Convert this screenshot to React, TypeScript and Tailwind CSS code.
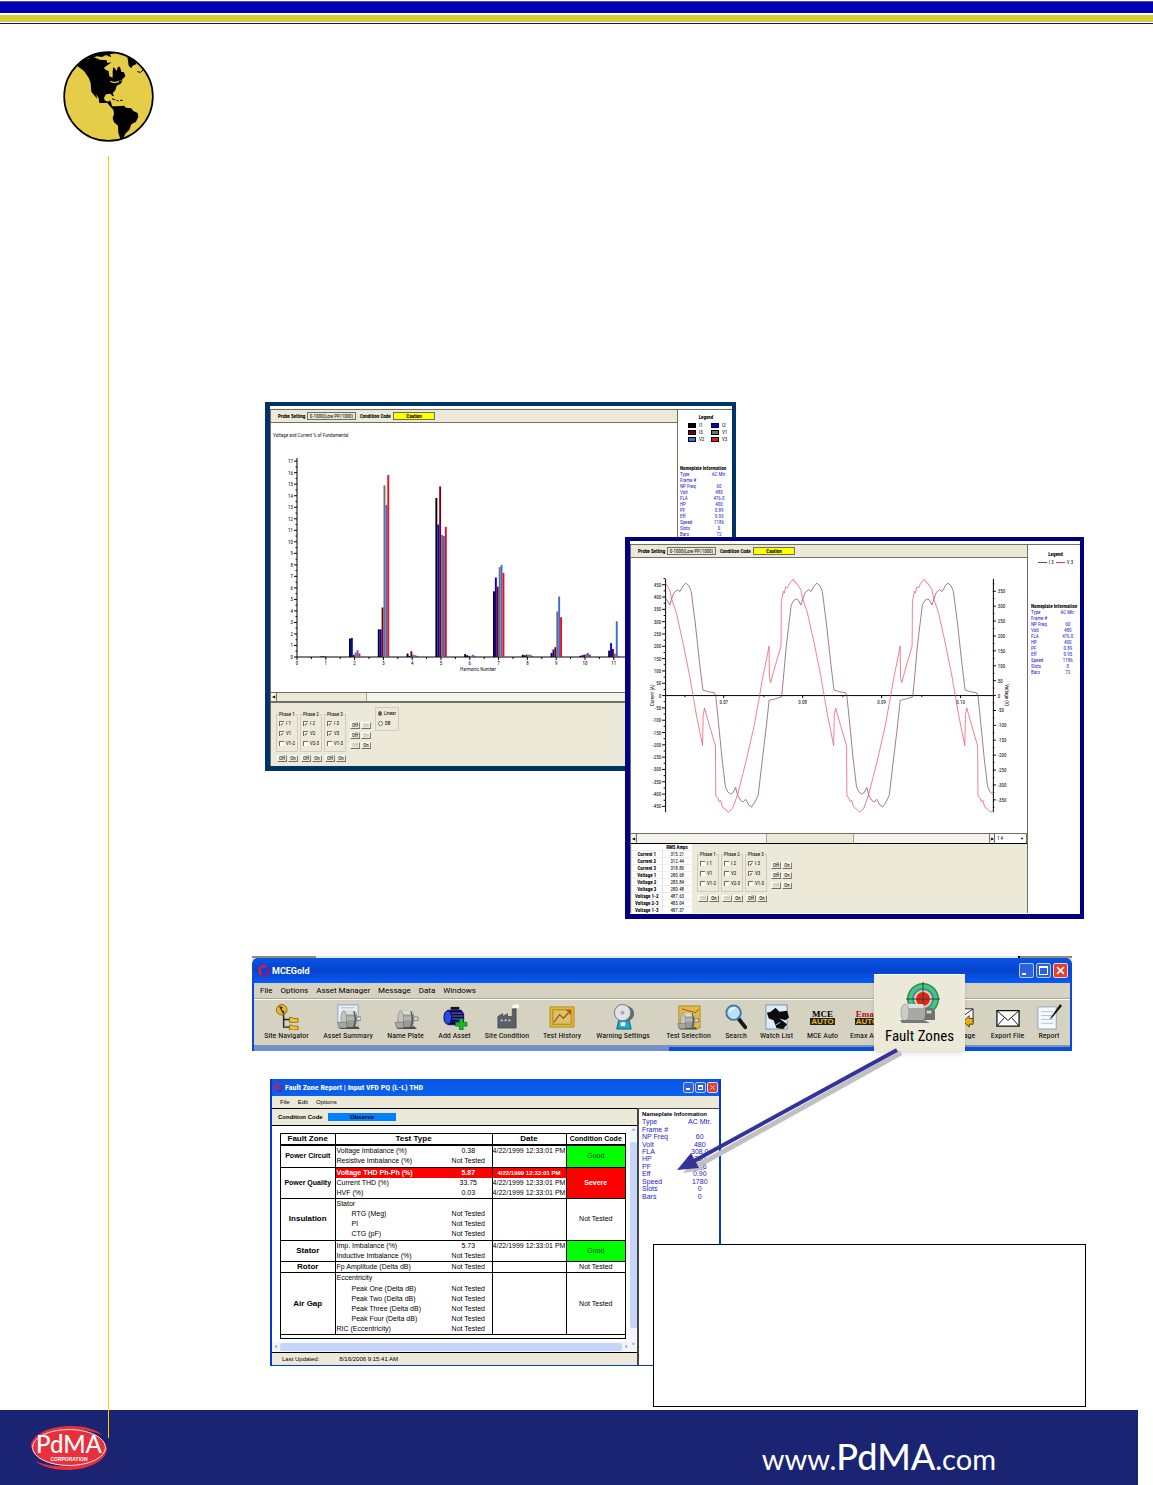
import type { ReactNode } from 'react';
import clsx from 'clsx';

type Point = [number, number];

const NAMEPLATE_LABELS = ['Type', 'Frame #', 'NP Freq', 'Volt', 'FLA', 'HP', 'PF', 'Eff', 'Speed', 'Slots', 'Bars'];

const HARMONIC_COLORS = ['#000000', '#0000dd', '#7a0010', '#707070', '#4169d9', '#e8101c'];

// One row per harmonic, in the order I1, I2, I3, V1, V2, V3 (% of fundamental)
const HARMONICS = [
  [0.05, 0.05, 0.05, 0.05, 0, 0],
  [1.6, 1.65, 0.2, 0.4, 0.6, 0.3],
  [2.4, 2.4, 4.3, 14.9, 13.2, 15.8],
  [0.3, 0.1, 0.5, 0.2, 0.15, 0.1],
  [13.8, 11.5, 14.8, 10.6, 10.5, 11.3],
  [0.25, 0.15, 0.1, 0.1, 0.2, 0.1],
  [5.7, 6.9, 6.1, 7.8, 8, 7.3],
  [0.2, 0.15, 0.2, 0.2, 0.2, 0.1],
  [0.35, 0.65, 0.85, 3.95, 5.25, 3.45],
  [0.1, 0.15, 0.2, 0.25, 0.35, 0.2],
  [0.55, 1.2, 0.7, 0.3, 3.1, 0.1],
];

// A single cycle of each wave form, three units to a pixel
const CYCLE = 396;
const VOLTAGE_WAVE: Point[] = [
  [131, 158], [145, 180], [150, 205], [165, 250], [185, 340], [205, 440], [225, 555], [244, 650], [246, 560], [250, 537],
  [265, 590], [283, 652], [284, 803], [290, 808], [294, 820], [299, 816], [304, 836], [313, 842], [322, 852], [335, 840],
  [350, 798], [375, 700], [400, 590], [425, 450], [445, 350], [446, 445], [450, 460], [458, 430], [465, 405], [481, 350],
  [482, 215], [488, 185], [491, 190], [495, 172], [501, 174], [506, 162], [518, 148], [525, 160],
];
const CURRENT_WAVE: Point[] = [
  [131, 208], [136, 210], [145, 226], [150, 210], [158, 188], [168, 180], [176, 185], [185, 169], [193, 160], [203, 168],
  [210, 185], [222, 280], [235, 400], [245, 483], [262, 488], [280, 491], [284, 500], [292, 580], [303, 690], [313, 775],
  [320, 790], [328, 797], [336, 793], [344, 777], [350, 800], [358, 815], [366, 821], [374, 813], [384, 830], [392, 836],
  [402, 822], [412, 800], [425, 690], [437, 590], [445, 514], [465, 509], [483, 503], [487, 460], [497, 350], [512, 225],
  [520, 212],
];

function wavePoints(cycle: Point[]) {
  return [0, 1, 2]
    .flatMap((n) => cycle.map(([x, y]) => [(x - 131 + n * CYCLE) / 3 + 34, y / 3 - 28]))
    .map(([x, y]) => `${x.toFixed(1)},${y.toFixed(1)}`)
    .join(' ');
}

function HarmonicChart() {
  const x0 = 26;
  const y0 = 234;
  return (
    <svg viewBox="0 0 406 269" className="block h-[269px] w-[406px]" role="img" aria-label="Harmonic spectrum" fontSize="5">
      <text x="2" y="14" fill="#222">Voltage and Current % of Fundamental</text>
      <path d={`M${x0} 35V${y0}H406`} fill="none" stroke="#000" />
      {Array.from({ length: 35 }, (_, i) => (
        <path key={i} d={`M${x0} ${y0 - i * 5.76}h${i % 2 ? -1.5 : -3}`} stroke="#000" />
      ))}
      {Array.from({ length: 18 }, (_, i) => (
        <text key={i} x="22" y={y0 + 2 - i * 11.52} textAnchor="end">{i}</text>
      ))}
      {Array.from({ length: 26 }, (_, i) => (
        <path key={i} d={`M${x0 + i * 14.4} ${y0}v${i % 2 ? 2 : 3}`} stroke="#000" />
      ))}
      {Array.from({ length: 12 }, (_, i) => (
        <text key={i} x={x0 + i * 28.8} y={y0 + 8} textAnchor="middle">{i}</text>
      ))}
      <text x="207" y={y0 + 14} textAnchor="middle" fill="#222">Harmonic Number</text>
      {HARMONICS.map((row, h) =>
        row.map((value, i) => (
          <rect
            key={`${h}-${i}`}
            x={x0 + (h + 1) * 28.8 - 5.6 + i * 1.9}
            y={y0 - value * 11.52}
            width="1.9"
            height={value * 11.52}
            fill={HARMONIC_COLORS[i]}
          />
        )),
      )}
    </svg>
  );
}

function WaveChart() {
  return (
    <svg viewBox="1 0 396 277" className="block h-[277px] w-[396px]" role="img" aria-label="Current and voltage wave forms" fontSize="5">
      <path d="M34.500 21V256M364.500 21V256M34 138.500H364" fill="none" stroke="#000" />
      {Array.from({ length: 38 }, (_, i) => (
        <path key={i} d={`M34 ${138.5 + (i - 19) * 6.2}h${i % 2 ? -3 : -1.5}`} stroke="#000" />
      ))}
      {Array.from({ length: 19 }, (_, i) => (
        <text key={i} x="30" y={140.5 + (i - 9) * 12.4} textAnchor="end">{(9 - i) * 50}</text>
      ))}
      {Array.from({ length: 31 }, (_, i) => (
        <path key={i} d={`M364 ${138.5 + (i - 15) * 7.5}h${i % 2 ? 3 : 1.5}`} stroke="#000" />
      ))}
      {Array.from({ length: 15 }, (_, i) => (
        <text key={i} x="369" y={140.5 + (i - 7) * 15}>{(7 - i) * 50}</text>
      ))}
      {['0.07', '0.08', '0.09', '0.10'].map((label, i) => (
        <g key={label}>
          <path d={`M${93 + i * 79.5} 138v3M${54 + i * 79.5} 138v2`} stroke="#000" />
          <text x={93 + i * 79.5} y="147" textAnchor="middle">{label}</text>
        </g>
      ))}
      <text transform="translate(23 149) rotate(-90)">Current (A)</text>
      <text transform="translate(376 127) rotate(90)">Voltage (V)</text>
      <svg x="34" y="0" width="331" height="277" viewBox="34 0 331 277">
        <polyline points={wavePoints(CURRENT_WAVE)} fill="none" stroke="#7d4058" strokeWidth="0.7" />
        <polyline points={wavePoints(VOLTAGE_WAVE)} fill="none" stroke="#f04858" strokeWidth="0.7" />
      </svg>
    </svg>
  );
}

function ProbeBar() {
  return (
    <div className="flex h-[14px] items-center gap-px border-y border-[#716f64] bg-[#ece9d8] pl-[7px] text-[5px] leading-[6px] whitespace-nowrap">
      <span className="w-7 font-bold">Probe Setting</span>
      <span className="w-[49px] border border-[#716f64] text-center">0-1000(Low PP/1000)</span>
      <span className="ml-[3px] w-8 font-bold">Condition Code</span>
      <span className="w-[42px] border border-[#716f64] bg-[#ffff00] text-center font-bold">Caution</span>
    </div>
  );
}

function Nameplate({ values, large = false }: { values: string[]; large?: boolean }) {
  return (
    <table className={clsx('w-full', large ? 'h-[82px] text-[7px] leading-[7px]' : 'text-[5px] leading-[6px]')}>
      <caption className={clsx('text-left font-bold whitespace-nowrap text-black', large && 'text-[6px]')}>
        Nameplate Information
      </caption>
      <tbody className="text-[#1c1cd0]">
        {NAMEPLATE_LABELS.map((label, i) => (
          <tr key={label}>
            <th scope="row" className="w-1/2 p-0 text-left font-normal whitespace-nowrap">{label}</th>
            <td className="p-0 text-center whitespace-nowrap">{values[i]}</td>
          </tr>
        ))}
      </tbody>
    </table>
  );
}

function TinyButton({ label, dim = false }: { label: string; dim?: boolean }) {
  return (
    <button
      type="button"
      disabled={dim}
      className={clsx(
        'h-[7px] w-[10px] border border-t-white border-r-[#85836f] border-b-[#716f64] border-l-white text-[5px] leading-[5px]',
        dim ? 'text-[#b5b2a0]' : 'text-black',
      )}
    >
      {label}
    </button>
  );
}

function PhaseControls({ name, rows, checked, offDim }: { name: string; rows: string[][]; checked: boolean[]; offDim: boolean[] }) {
  return (
    <div className="flex gap-[2px] text-[5px] leading-[6px]">
      {rows.map((labels, p) => (
        <div key={p} className="flex flex-col gap-[3px]">
          <fieldset className="h-[41px] w-[22px] border border-[#cfccba] px-[2px]">
            <legend className="text-[5px] leading-[6px] whitespace-nowrap">Phase {p + 1}</legend>
            <div className="flex flex-col gap-1 pt-[3px]">
              {labels.map((label, i) => (
                <label key={label} htmlFor={`${name}-${p}-${i}`} className="flex items-center gap-[2px] whitespace-nowrap">
                  <input
                    id={`${name}-${p}-${i}`}
                    type="checkbox"
                    defaultChecked={checked[p] && i < 2}
                    className="flex size-[5px] shrink-0 appearance-none items-center justify-center border-t border-l border-[#716f64] bg-white text-[5px] leading-[4px] checked:before:font-bold checked:before:content-['✓']"
                  />
                  {label}
                </label>
              ))}
            </div>
          </fieldset>
          <div className="flex gap-px pl-px">
            <TinyButton label="Off" dim={offDim[p]} />
            <TinyButton label="On" />
          </div>
        </div>
      ))}
      <div className="flex flex-col gap-[3px] pt-[11px] pl-[2px]">
        {[0, 1, 2].map((i) => (
          <div key={i} className="flex gap-px">
            <TinyButton label="Off" dim={i === 2} />
            <TinyButton label="On" dim={name === 'spectrum' && i < 2} />
          </div>
        ))}
      </div>
    </div>
  );
}

function SpectrumWindow() {
  return (
    <div className="relative ml-[13px] flex h-[369px] w-[471px] border-4 border-b-[5px] border-l-[5px] border-[#003366] bg-white pt-[3px]">
      <div className="flex w-[407px] flex-col border-l border-[#716f64]">
        <ProbeBar />
        <HarmonicChart />
        <div className="flex h-[9px] border-t border-[#716f64] bg-[#f5f4ec]">
          <button type="button" aria-label="Scroll left" className="flex w-[6px] items-center justify-center border-r border-[#716f64] text-[4px]">◀</button>
          <div className="w-[90px] border-r border-[#a5a290] bg-[#ece9d8]" />
        </div>
        <div className="flex flex-1 gap-1 border-t-2 border-[#716f64] bg-[#ece9d8] pt-[8px] pl-[5px]">
          <PhaseControls
            name="spectrum"
            rows={[['I 1', 'V1', 'V1-2'], ['I 2', 'V2', 'V2-3'], ['I 3', 'V3', 'V1-3']]}
            checked={[true, true, true]}
            offDim={[false, false, false]}
          />
          <div className="-mt-1 flex h-6 w-6 flex-col gap-1 border border-[#cfccba] p-[2px] text-[5px] leading-[6px]">
            {['Linear', 'DB'].map((label, i) => (
              <label key={label} htmlFor={`scale-${label}`} className="flex items-center gap-[2px]">
                <input
                  id={`scale-${label}`}
                  type="radio"
                  name="scale"
                  defaultChecked={i === 0}
                  className="size-[5px] appearance-none rounded-full border border-[#716f64] bg-white checked:bg-[#555]"
                />
                {label}
              </label>
            ))}
          </div>
        </div>
      </div>
      <div className="flex-1 border-t border-l border-[#716f64] pl-[2px]">
        <div className="pt-1 text-center text-[5px] leading-[6px] font-bold">Legend</div>
        <div className="grid grid-cols-2 gap-x-[2px] gap-y-px pt-[2px] pl-2 text-[5px] leading-[6px]">
          {['I1', 'I2', 'I3', 'V1', 'V2', 'V3'].map((label, i) => (
            <div key={label} className="flex items-center gap-[3px]">
              <span className="h-[5px] w-2 border border-black" style={{ backgroundColor: HARMONIC_COLORS[i] }} />
              {label}
            </div>
          ))}
        </div>
        <div className="pt-[23px]">
          <Nameplate values={['AC Mtr.', '', '60', '480', '476.0', '400', '0.89', '0.95', '1186', '0', '72']} />
        </div>
      </div>
    </div>
  );
}

const RMS_ROWS = [
  ['Current 1', '315.21'], ['Current 2', '312.44'], ['Current 3', '318.80'],
  ['Voltage 1', '280.68'], ['Voltage 2', '283.84'], ['Voltage 3', '280.48'],
  ['Voltage 1-2', '487.63'], ['Voltage 2-3', '483.04'], ['Voltage 1-3', '487.37'],
];

function WaveWindow() {
  return (
    <div className="relative -mt-[234px] ml-[373px] flex h-[382px] w-[459px] border-4 border-b-[5px] border-l-[5px] border-[#000080] bg-white pt-[3px] pb-px">
      <div className="flex w-[397px] flex-col border-l border-[#716f64]">
        <ProbeBar />
        <WaveChart />
        <div className="flex h-[10px] border-t border-[#716f64] bg-[#f5f4ec]">
          <button type="button" aria-label="Scroll left" className="w-[6px] border-r border-[#716f64] text-[4px] leading-[7px]">◀</button>
          <div className="ml-[129px] w-[88px] border-x border-[#a5a290] bg-[#ece9d8]" />
          <button type="button" aria-label="Scroll right" className="ml-auto w-[6px] border-x border-[#716f64] text-[4px] leading-[7px]">▶</button>
          <div className="flex w-8 items-center justify-between border-r border-[#716f64] bg-white px-[2px] text-[4px]">
            <select aria-label="Cycles" className="w-5 appearance-none text-[5px] leading-[7px]">
              <option>1 4</option>
            </select>
            <span>▼</span>
          </div>
        </div>
        <div className="flex flex-1 gap-[5px] border-t border-black bg-[#ece9d8] pl-px">
          <table className="h-[66px] w-[60px] bg-white text-[5px] leading-[6px]">
            <thead>
              <tr>
                <td className="w-1/2 p-0" />
                <th scope="col" className="p-0 text-center whitespace-nowrap">RMS Amps</th>
              </tr>
            </thead>
            <tbody>
              {RMS_ROWS.map(([label, value]) => (
                <tr key={label} className="border-t border-[#eeeeee]">
                  <th scope="row" className="border-r border-[#e2e2e2] p-0 text-center whitespace-nowrap">{label}</th>
                  <td className="p-0 text-center">{value}</td>
                </tr>
              ))}
            </tbody>
          </table>
          <div className="pt-[7px]">
            <PhaseControls
              name="wave"
              rows={[['I 1', 'V1', 'V1-2'], ['I 2', 'V2', 'V2-3'], ['I 3', 'V3', 'V1-3']]}
              checked={[false, false, true]}
              offDim={[true, true, false]}
            />
          </div>
        </div>
      </div>
      <div className="flex-1 border-t border-l border-[#716f64] pl-[3px]">
        <div className="pt-[6px] text-center text-[5px] leading-[6px] font-bold">Legend</div>
        <div className="flex items-center justify-center gap-[2px] pt-[2px] text-[5px] leading-[6px]">
          <span className="w-[9px] border-t border-[#7d4058]" />
          I 3
          <span className="w-[9px] border-t border-[#f0384a]" />
          V 3
        </div>
        <div className="pt-[38px]">
          <Nameplate values={['AC Mtr.', '', '60', '480', '476.0', '400', '0.89', '0.95', '1186', '0', '72']} />
        </div>
      </div>
    </div>
  );
}

function WindowButtons({ large = false }: { large?: boolean }) {
  const size = large ? 'size-[15px]' : 'size-[11px]';
  return (
    <div className={clsx('flex', large ? 'gap-[2px]' : 'gap-px')}>
      <button type="button" aria-label="Minimize" className={clsx('flex items-end rounded-[2px] border border-[#b8c8f4] bg-[#2d62df] p-[2px]', size)}>
        <span className="h-[2px] w-1 bg-white" />
      </button>
      <button type="button" aria-label="Maximize" className={clsx('rounded-[2px] border border-[#b8c8f4] bg-[#2d62df] p-[2px]', size)}>
        <span className="block size-full border border-t-2 border-white" />
      </button>
      <button type="button" aria-label="Close" className={clsx('rounded-[2px] border border-[#f4d0c8] bg-[#e0432a] p-[2px]', size)}>
        <svg viewBox="0 0 8 8" className="block size-full" stroke="#fff" strokeWidth="1.5">
          <path d="M1 1l6 6M7 1L1 7" />
        </svg>
      </button>
    </div>
  );
}

function SwirlIcon({ className }: { className: string }) {
  return (
    <svg viewBox="0 0 12 12" className={className} fill="none" strokeWidth="2.6">
      <path d="M8 1.500C4.500 0 1 2.500 1.500 6c.2 1.500 1 2.800 2 3.500" stroke="#e01840" />
      <path d="M4 10.500c3.500 1.500 7-1 6.500-4.500-.2-1.500-1-2.800-2-3.500" stroke="#8a1880" />
    </svg>
  );
}

function Motor() {
  return (
    <g>
      <path d="M3 21h19l3 3H5z" fill="#4c4c48" />
      <path d="M8 5h12c3 2 3 14 0 17H8z" fill="#9a9a94" />
      <path d="M8 5h12l1.500 4H6z" fill="#dcdcd8" />
      <path d="M6.500 11H22v4H6z" fill="#b6b6b0" />
      <ellipse cx="8" cy="13.500" rx="3" ry="8.500" fill="#c4c4be" stroke="#777" strokeWidth=".6" />
      <path d="M18.500 5.500c2 4 2 12 0 16.500" fill="none" stroke="#55554f" strokeWidth="1.500" />
      <path d="M21.500 11.500H26v3.500h-4.500z" fill="#e4e4e0" stroke="#555" strokeWidth=".7" />
      <path d="M2 17h9v6H4z" fill="#a8a8a2" stroke="#666" strokeWidth=".6" />
    </g>
  );
}

const TOOL_ART: Record<string, ReactNode> = {
  'Site Navigator': (
    <g>
      <path d="M10 9v15h9M10 16h9" fill="none" stroke="#222" strokeWidth="1.500" />
      <circle cx="8" cy="6" r="5.500" fill="#e6b92c" stroke="#8a6a18" />
      <path d="M5 2l4 1-1 3 3 2-1 3-2-3z" fill="#352a08" />
      <path d="M16 14h3l1 1h5v4h-9zM16 22h3l1 1h5v4h-9z" fill="#f1c232" stroke="#7a5a00" strokeWidth=".8" />
    </g>
  ),
  'Asset Summary': (
    <g>
      <path d="M3 1h21v24H3z" fill="#edf3fa" stroke="#8ba0b8" />
      <path d="M6 4h15M6 23h15" stroke="#9bb" />
      <g transform="translate(1 2)"><Motor /></g>
    </g>
  ),
  'Name Plate': <g transform="translate(0 2)"><Motor /></g>,
  'Add Asset': (
    <g>
      <path d="M9 3h9v3H9z" fill="#111" />
      <path d="M6 6h14l3 4v9l-3 3H7l-4-3V9z" fill="#14148c" />
      <path d="M9 8h12M9 11h13M9 14h13M9 17h13M9 20h11" stroke="#050530" strokeWidth="1.500" />
      <path d="M10 9.500h11M10 12.500h12M10 15.500h8" stroke="#7080c8" strokeWidth=".8" />
      <ellipse cx="6" cy="14" rx="4" ry="7" fill="#2c48e8" stroke="#0a0a50" />
      <path d="M18 15h4v4h4v4h-4v4h-4v-4h-4v-4h4z" fill="#19b52a" stroke="#0a6010" strokeWidth=".6" />
    </g>
  ),
  'Site Condition': (
    <g>
      <path d="M19 2c2-3 5 0 7-2v4c-3 1-4-1-7 1z" fill="#fafafa" />
      <path d="M4 25V13l5-3v3l5-3v3h5V5h4v20z" fill="#5a6068" stroke="#30343a" strokeWidth=".6" />
      <path d="M7 17h2M11 17h2M15 17h2" stroke="#bcd4ec" strokeWidth="2" />
    </g>
  ),
  'Test History': (
    <g>
      <path d="M1 3h25v21H1z" fill="#e3b63a" stroke="#b58f28" />
      <path d="M4 6h19v15H4z" fill="#d9c267" stroke="#a88520" />
      <path d="M5 19l6-8 4 4 7-8M18 7h4v4" fill="none" stroke="#b04a20" strokeWidth="1.300" />
    </g>
  ),
  'Warning Settings': (
    <g>
      <path d="M9 17h11l2 9H7z" fill="#18a8c8" stroke="#086880" />
      <circle cx="17" cy="10" r="8" fill="#666a70" />
      <circle cx="13" cy="9" r="8.500" fill="#dfe2e6" stroke="#6d7077" />
      <circle cx="13" cy="9" r="2" fill="#aaa" />
      <path d="M11 19h5v4h-5z" fill="#eee" />
    </g>
  ),
  'Test Selection': (
    <g>
      <path d="M3 2h22v23H3z" fill="#ddbd4a" stroke="#b08d28" />
      <path d="M6 5l14 4 4-4" stroke="#b04a20" fill="none" />
      <g transform="translate(0 5) scale(.9)"><Motor /></g>
    </g>
  ),
  Search: (
    <g>
      <path d="M16 15l7 9" stroke="#181818" strokeWidth="4" strokeLinecap="round" />
      <circle cx="11" cy="9" r="7.500" fill="#b9e2fb" stroke="#4778a8" strokeWidth="2" />
      <path d="M7 8c1-3 3-4 6-4" stroke="#fff" strokeWidth="1.500" fill="none" />
    </g>
  ),
  'Watch List': (
    <g>
      <path d="M2 1h22v25H2z" fill="#dcecf8" stroke="#7593ad" />
      <path d="M3 9l4-1 5-4 4 4 8-1 2 7-4 3-6-2 8 6-4 5-7-1-3-8-5-2z" fill="#0c0c0c" />
      <path d="M12 22l5-3" stroke="#8cc" />
    </g>
  ),
  Message: (
    <g>
      <path d="M5 5h21v14H5z" fill="#fff" stroke="#222" />
      <path d="M5 5l10 8L26 5" fill="none" stroke="#222" />
      <path d="M16 18l6-6v3h4v6h-4v3z" fill="#e8b020" stroke="#5a4000" />
    </g>
  ),
  'Export File': (
    <g>
      <path d="M2 7h23v16H2z" fill="#fff" stroke="#111" strokeWidth="1.300" />
      <path d="M2 7l11.500 10L25 7M2 23l8-9M25 23l-8-9" fill="none" stroke="#111" />
    </g>
  ),
  Report: (
    <g>
      <path d="M2 3h19v23H2z" fill="#f6fafd" stroke="#8aa4bc" />
      <path d="M5 8h13M5 12h13M5 16h13M5 20h13" stroke="#a8c4e0" />
      <path d="M25 0l-9 13-2 3 3-2L27 2z" fill="#181818" />
    </g>
  ),
};

const TOOLS = [
  { label: 'Site Navigator', width: 'w-[47px]' },
  { label: 'Asset Summary', width: 'w-[52px]' },
  { label: 'Name Plate', width: 'w-[39px]' },
  { label: 'Add Asset', width: 'w-[35px]' },
  { label: 'Site Condition', width: 'w-[46px]' },
  { label: 'Test History', width: 'w-[40px]' },
  { label: 'Warning Settings', width: 'w-[58px]' },
  { label: 'Test Selection', width: 'w-[49px]' },
  { label: 'Search', width: 'w-[22px]' },
  { label: 'Watch List', width: 'w-[35px]' },
  { label: 'MCE Auto', width: 'w-[33px]' },
  { label: 'Emax Auto', width: 'w-[32px] mr-[50px]' },
  { label: 'Message', width: 'w-[32px]' },
  { label: 'Export File', width: 'w-[37px]' },
  { label: 'Report', width: 'w-[22px]' },
];

function ToolIcon({ label }: { label: string }) {
  if (label === 'MCE Auto' || label === 'Emax Auto') {
    return (
      <span className="flex h-[26px] flex-col items-center justify-center font-['Liberation_Serif',serif] text-[9px] leading-[8px] font-bold">
        <span className={label === 'MCE Auto' ? 'text-black' : 'text-[#b01020]'}>{label === 'MCE Auto' ? 'MCE' : 'Emax'}</span>
        <span className="bg-[#222] px-px font-['Liberation_Sans',sans-serif] text-[8px] leading-[7px] text-[#e8b820]">AUTO</span>
      </span>
    );
  }
  return (
    <svg viewBox="0 0 27 27" className="block size-[26px]" aria-hidden="true">
      {TOOL_ART[label]}
    </svg>
  );
}

function ToolbarWindow() {
  return (
    <div className="relative mt-[37px] w-[820px] bg-[#e9e7dc]">
      <div className="flex h-[2px] justify-between">
        <div className="w-16 bg-[#8b8b80]" />
        <div className="w-[54px] border-l-2 border-black bg-[#8b8b80]" />
      </div>
      <div className="rounded-t-md border-x-2 border-[#0a48d8] bg-[#d6d2c2]">
        <div className="flex h-[25px] items-center gap-[2px] rounded-t bg-linear-to-b from-[#0a55e6] via-[#0443cc] to-[#0a5cf5] pr-[2px] pl-1 text-white">
          <SwirlIcon className="size-3" />
          <span className="font-['Roboto',sans-serif] text-[9px] leading-3 font-bold">MCEGold</span>
          <div className="ml-auto"><WindowButtons large /></div>
        </div>
        <nav className="flex h-4 items-center gap-2 border-b border-[#aaa695] pl-[6px] font-['Roboto',sans-serif] text-[8px] leading-3">
          {['File', 'Options', 'Asset Manager', 'Message', 'Data', 'Windows'].map((item) => (
            <button key={item} type="button">{item}</button>
          ))}
        </nav>
        <div className="flex h-[46px] gap-3 border-t border-white pt-1 pl-[9px]">
          {TOOLS.map(({ label, width }) => (
            <button key={label} type="button" className={clsx('flex shrink-0 flex-col items-center text-[8px] leading-3 whitespace-nowrap', width)}>
              <ToolIcon label={label} />
              {label}
            </button>
          ))}
        </div>
        <div className="flex h-[6px] border-t-2 border-[#8291ae] bg-[#0a4fe0]">
          <div className="w-[415px] bg-[#6f8fdc]" />
        </div>
      </div>

      {/* Enlarged tool button */}
      <button type="button" className="absolute top-[18px] left-[622px] flex h-[77px] w-[91px] flex-col items-center border-t border-white bg-[#ece9d8] pt-[6px] shadow-md">
        <svg viewBox="0 0 42 44" className="block h-[46px] w-[42px]" aria-hidden="true">
          <circle cx="24" cy="17" r="16" fill="#2b8a62" />
          <circle cx="24" cy="17" r="14.500" fill="#46c878" />
          <circle cx="24" cy="17" r="11" fill="#3f8fa8" />
          <circle cx="24" cy="17" r="9" fill="#eed5a0" />
          <circle cx="24" cy="17" r="7" fill="#e22718" />
          <path d="M24 0v34M7 17h34" stroke="#26463a" />
          <path d="M24 26h9l3 3v9H20z" fill="#73736e" />
          <path d="M5 22h19c3 3 3 14 0 17H5z" fill="#a9a9a4" />
          <path d="M5 22h19l1 4H3z" fill="#dededa" />
          <ellipse cx="6" cy="30.500" rx="4" ry="8.500" fill="#cdcdc8" stroke="#888" strokeWidth=".6" />
          <path d="M1 38h24l6 3H3z" fill="#777773" />
          <path d="M27 28h6v4h-6z" fill="#d4d4d0" stroke="#666" />
        </svg>
        <span className="text-[15px] leading-[18px] whitespace-nowrap">Fault Zones</span>
      </button>

      {/* Callout arrow down to the report */}
      <svg viewBox="0 0 230 130" className="pointer-events-none absolute top-[90px] left-[420px] z-10 h-[130px] w-[230px]" aria-hidden="true">
        <g fill="#c0c0c0" stroke="#c0c0c0">
          <path d="M229 7L27 119" strokeWidth="5" />
          <path d="M11 127l13-16 8 13z" stroke="none" />
        </g>
        <g fill="#333399" stroke="#333399">
          <path d="M225 4L22 115" strokeWidth="4" />
          <path d="M5 124l14-17 8 15z" stroke="none" />
        </g>
      </svg>
    </div>
  );
}

type Reading = { name: string; value?: string; date?: string; indent?: boolean; alert?: boolean };
type Zone = { zone: string; status: string; tests: Reading[] };

const NOT_TESTED = 'Not Tested';
const STAMP = '4/22/1999 12:33:01 PM';

const ZONES: Zone[] = [
  {
    zone: 'Power Circuit',
    status: 'Good',
    tests: [
      { name: 'Voltage Imbalance (%)', value: '0.38', date: STAMP },
      { name: 'Resistive Imbalance (%)', value: NOT_TESTED },
    ],
  },
  {
    zone: 'Power Quality',
    status: 'Severe',
    tests: [
      { name: 'Voltage THD Ph-Ph (%)', value: '5.87', date: STAMP, alert: true },
      { name: 'Current THD (%)', value: '33.75', date: STAMP },
      { name: 'HVF (%)', value: '0.03', date: STAMP },
    ],
  },
  {
    zone: 'Insulation',
    status: NOT_TESTED,
    tests: [
      { name: 'Stator' },
      { name: 'RTG (Meg)', value: NOT_TESTED, indent: true },
      { name: 'PI', value: NOT_TESTED, indent: true },
      { name: 'CTG (pF)', value: NOT_TESTED, indent: true },
    ],
  },
  {
    zone: 'Stator',
    status: 'Good',
    tests: [
      { name: 'Imp. Imbalance (%)', value: '5.73', date: STAMP },
      { name: 'Inductive Imbalance (%)', value: NOT_TESTED },
    ],
  },
  { zone: 'Rotor', status: NOT_TESTED, tests: [{ name: 'Fp Amplitude (Delta dB)', value: NOT_TESTED }] },
  {
    zone: 'Air Gap',
    status: NOT_TESTED,
    tests: [
      { name: 'Eccentricity' },
      { name: 'Peak One (Delta dB)', value: NOT_TESTED, indent: true },
      { name: 'Peak Two (Delta dB)', value: NOT_TESTED, indent: true },
      { name: 'Peak Three (Delta dB)', value: NOT_TESTED, indent: true },
      { name: 'Peak Four (Delta dB)', value: NOT_TESTED, indent: true },
      { name: 'RIC (Eccentricity)', value: NOT_TESTED },
    ],
  },
];

const STATUS_STYLE: Record<string, string> = {
  Good: 'bg-[#00ff00] text-[#064d06]',
  Severe: 'bg-[#ff0000] text-white font-bold',
  'Not Tested': 'bg-white',
};

function FaultTable() {
  return (
    <table className="h-[201px] w-full table-fixed text-[7px] leading-[8px] whitespace-nowrap">
      <colgroup>
        <col className="w-[54px]" />
        <col className="w-[110px]" />
        <col className="w-[47px]" />
        <col className="w-[74px]" />
        <col />
      </colgroup>
      <thead>
        <tr className="h-[11px] border-b-2 border-black">
          <th scope="col" className="border-r border-black p-0 text-[8px]">Fault Zone</th>
          <th scope="col" colSpan={2} className="border-r border-black p-0 text-[8px]">Test Type</th>
          <th scope="col" className="border-r border-black p-0 text-[8px]">Date</th>
          <th scope="col" className="p-0">Condition Code</th>
        </tr>
      </thead>
      {ZONES.map(({ zone, status, tests }) => (
        <tbody key={zone} className="border-b border-black">
          {tests.map((test, i) => (
            <tr key={test.name} className={test.alert ? 'bg-[#ff0000] font-bold text-white' : ''}>
              {i === 0 && (
                <th
                  scope="rowgroup"
                  rowSpan={tests.length}
                  className={clsx(
                    'border-r border-black bg-white p-0 text-center text-black',
                    zone.startsWith('Power') ? 'text-[7px]' : 'text-[8px]',
                  )}
                >
                  {zone}
                </th>
              )}
              <td className={clsx('p-0', test.indent ? 'pl-4' : 'pl-px')}>{test.name}</td>
              <td className="border-r border-black p-0 text-center">{test.value}</td>
              <td className={clsx('border-r border-black p-0 text-center', test.alert && 'text-[6px]')}>{test.date}</td>
              {i === 0 && (
                <td rowSpan={tests.length} className={clsx('p-0 text-center', STATUS_STYLE[status])}>
                  {status}
                </td>
              )}
            </tr>
          ))}
        </tbody>
      ))}
    </table>
  );
}

function ReportWindow() {
  return (
    <div className="mt-7 ml-[18px] flex h-[287px] w-[451px] flex-col border-x-2 border-b border-[#0a37c8] bg-white font-['Liberation_Sans',sans-serif]">
      <div className="flex h-[17px] items-center gap-[2px] bg-linear-to-b from-[#0a55e6] to-[#0862f0] pr-px pl-[2px] text-white">
        <SwirlIcon className="size-[9px]" />
        <span className="font-['Roboto_Condensed',sans-serif] text-[8px] leading-3 font-bold">Fault Zone Report | Input VFD PQ (L-L) THD</span>
        <div className="ml-auto"><WindowButtons /></div>
      </div>
      <nav className="flex h-3 shrink-0 items-center gap-2 bg-[#ece9d8] pl-2 text-[6px] leading-2">
        {['File', 'Edit', 'Options'].map((item) => (
          <button key={item} type="button">{item}</button>
        ))}
      </nav>
      <div className="flex min-h-0 flex-1">
        <div className="flex w-[365px] flex-col border-t border-black">
          <div className="flex h-[17px] items-center gap-1 border-b border-black bg-[#ece9d8] pl-[6px] text-[6px] leading-2 font-bold">
            <span className="w-[46px]">Condition Code</span>
            <span className="w-[68px] bg-[#0080ff] text-center leading-2">Observe</span>
          </div>
          <div className="flex flex-1">
            <div className="flex flex-1 flex-col justify-between">
              <div className="mt-[7px] ml-2 h-[206px] w-[346px] border border-black">
                <FaultTable />
              </div>
              <div className="flex h-[10px] items-center justify-between bg-[#f2f5fd]">
                <button type="button" aria-label="Scroll left" className="w-2 text-[8px] leading-2 text-[#4060b0]">‹</button>
                <div className="h-2 flex-1 rounded-xs bg-[#c6d6fb]" />
                <button type="button" aria-label="Scroll right" className="w-2 text-[8px] leading-2 text-[#4060b0]">›</button>
              </div>
            </div>
            <div className="flex w-[7px] flex-col bg-[#f2f5fd] text-[6px] leading-2 text-[#4060b0]">
              <button type="button" aria-label="Scroll up" className="h-2">˄</button>
              <div className="my-2 flex-1 rounded-xs bg-[#c6d6fb]" />
              <button type="button" aria-label="Scroll down" className="h-4">˅</button>
            </div>
          </div>
          <div className="flex h-[13px] items-center gap-5 border-t border-black bg-[#ece9d8] pl-[10px] text-[6px] leading-2">
            <span>Last Updated:</span>
            <span>8/16/2006 9:15:41 AM</span>
          </div>
        </div>
        <div className="flex-1 border-t border-l-2 border-[#444] pt-[2px] pl-[3px]">
          <Nameplate large values={['AC Mtr.', '', '60', '480', '308.0', '250', '0.86', '0.90', '1780', '0', '0']} />
        </div>
      </div>
    </div>
  );
}

function Globe() {
  return (
    <svg viewBox="189 152 273 273" className="block size-[91px]" role="img" aria-label="Globe">
      <circle cx="325.500" cy="288.500" r="133" fill="#e5cd47" stroke="#000" strokeWidth="5" />
      <path d="M232 197l20-19 28-8 20 8 20 2 2 8 13-2-13 9-10 7 4 6 10 4 2 16 10 4V212l2-12 6 6 4 6 4-13 6 1 4 14 8 2 4 12-10 10-14 5 16-3-6 10-12 6-4 14-8 8 4 10-6-2-4-6-14 2-6 10 2 8 10 4 6-4 4 8 2 10h14l22-2 6 6 16 2 6 8 13 6 2 12-7 14-14 8-6 16-12 12-6 15-8 3-7-20-1-22-12-10-4-12 4-14-2-12-10-10-8-10h-24l-2-14-8-12 4 14-18-22-2-26-6-16-14-20z" />
      <path d="M258 172l27-10 41-8 24 3-20 5 4 8-8-2-8-4-12 6-16-2-14 6zM328 240l20-3 8 6-18 6zM382 168l26 16v8l-10 4-4 8-8-8z" />
      <path d="M412 214l10 2 8-8M336 295l10 4M350 300l6 2M360 300h8" fill="none" stroke="#000" strokeWidth="3" />
      <path d="M331 243l12 4 14-3" fill="none" stroke="#e5cd47" strokeWidth="4" />
    </svg>
  );
}

function Footer() {
  return (
    <footer className="mr-[15px] flex h-[75px] items-center bg-[#1a2472] pr-[142px] pl-[29px] text-white">
      <svg viewBox="0 0 80 46" className="block h-[46px] w-[80px]" role="img" aria-label="PdMA Corporation">
        <path d="M2 24C0 10 20 1 42 1c13 0 24 3 32 9C62 5 50 4 38 5 20 7 6 13 2 24z" fill="#e8303c" />
        <path d="M78 21c2 14-18 24-40 24-13 0-24-3-32-9 12 5 24 6 36 5 18-2 32-9 36-20z" fill="#e8303c" />
        <ellipse cx="40" cy="22.500" rx="36.500" ry="18" fill="#e8303c" stroke="#f4dfe4" strokeWidth="1" />
        <text x="40" y="28" textAnchor="middle" fill="#fff" fontFamily="Lato, sans-serif" fontSize="24" fontWeight="500">PdMA</text>
        <text x="40" y="36" textAnchor="middle" fill="#fff" fontFamily="Liberation Sans, sans-serif" fontSize="5" fontWeight="700">CORPORATION</text>
      </svg>
      <a href="#pdma" className="mt-5 ml-auto font-['Lato',sans-serif] text-[29px] leading-8 whitespace-nowrap">
        www.<span className="text-[36px] font-medium">PdMA</span>.com
      </a>
    </footer>
  );
}

export default function App() {
  return (
    <div className="bg-white font-['Roboto_Condensed','Liberation_Sans',sans-serif] text-black">
      <header className="flex flex-col pt-px">
        <div className="h-3 border-t border-[#55558a] bg-[#0000b0]" />
        <div className="mt-[2px] h-[7px] bg-[#d6cf36]" />
        <div className="mt-px h-px bg-[#101070]" />
      </header>
      <main className="flex">
        <aside className="relative z-10 -mb-7 flex flex-col items-center pt-[27px] pl-[63px]">
          <Globe />
          <div className="mt-[14px] w-px flex-1 bg-[#ffcc00]" />
        </aside>
        <section className="pt-[378px] pb-[3px] pl-[98px]">
          <SpectrumWindow />
          <WaveWindow />
          <ToolbarWindow />
          <ReportWindow />
          <div className="relative -mt-[122px] ml-[401px] h-[163px] w-[433px] border border-black bg-white" />
        </section>
      </main>
      <Footer />
    </div>
  );
}
